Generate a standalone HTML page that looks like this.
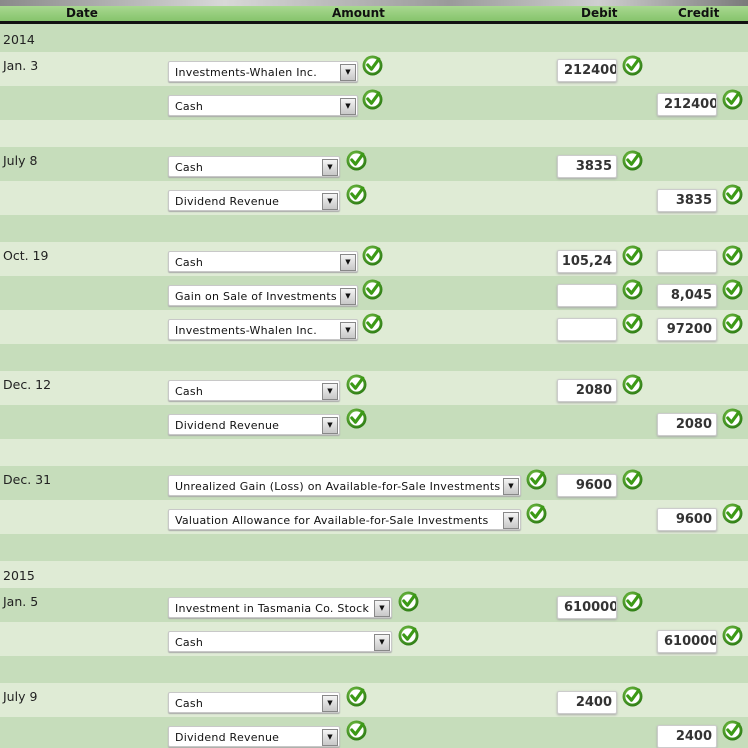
<!DOCTYPE html>
<html><head><meta charset="utf-8"><style>
body{margin:0;width:748px;height:746px;overflow:hidden;position:relative;background:#c6ddbb;font-family:"DejaVu Sans","Liberation Sans",sans-serif;}
.top{position:absolute;left:0;top:0;width:748px;height:6px;background:linear-gradient(90deg,#8a8a8a,#d8d8d8 30%,#9a9a9a 60%,#cfcfcf 80%,#7a7a7a);}
.hdr{position:absolute;left:0;top:6px;width:748px;height:15px;background:linear-gradient(#a8d890,#86c46c);font-weight:bold;font-size:12px;color:#111;}
.hdr span{position:absolute;top:0;line-height:14px;}
.bl{position:absolute;left:0;top:21px;width:748px;height:3px;background:#111;}
.r{position:absolute;left:0;width:748px;}
.d{background:#c6ddbb}.l{background:#dfebd5}
.dt{position:absolute;left:3px;font-size:12.5px;color:#222;}
.s{position:absolute;left:168px;height:21px;background:#fff;border:1px solid #c8c8c8;border-radius:2px;box-shadow:0 1px 1px #aaa;font-size:11px;letter-spacing:0.25px;color:#111;line-height:21px;padding-left:6px;box-sizing:border-box;white-space:nowrap;}
.s b{position:absolute;right:1px;top:2px;width:14px;height:15px;border:1px solid #888;background:linear-gradient(#f4f4f4,#c8c8c8);font-size:7px;line-height:15px;text-align:center;font-weight:normal;letter-spacing:0;}
.i{position:absolute;width:60px;height:23px;background:#fff;border:1px solid #ccc;border-radius:2px;box-shadow:0 1px 2px #aaa;box-sizing:border-box;font-weight:bold;font-size:13px;color:#333;text-align:right;line-height:22px;padding-right:4px;overflow:hidden;white-space:nowrap;}
.i.lg{text-align:left;padding-left:6px;padding-right:0;}
.c{position:absolute;width:21px;height:21px;}
</style></head><body>
<div class="top"></div>
<div class="hdr"><span style="left:66px">Date</span><span style="left:332px">Amount</span><span style="left:581px">Debit</span><span style="left:678px">Credit</span></div>
<div class="bl"></div>
<svg width="0" height="0" style="position:absolute"><defs><radialGradient id="g" cx="40%" cy="35%" r="70%"><stop offset="0" stop-color="#7cc64a"/><stop offset="1" stop-color="#2a7a12"/></radialGradient><symbol id="ck" viewBox="0 0 20 20"><circle cx="10" cy="10" r="9.5" fill="url(#g)"/><circle cx="10" cy="10" r="6.8" fill="#fff"/><path d="M5.5 9.5 L9 13.5 L16 4" fill="none" stroke="#3c9a16" stroke-width="3" stroke-linecap="round" stroke-linejoin="round"/></symbol></defs></svg>

<div class="r d" style="top:24px;height:28px"><span class="dt" style="top:8px">2014</span></div>
<div class="r l" style="top:52px;height:34px"><span class="dt" style="top:6px">Jan. 3</span></div>
<div class="r d" style="top:86px;height:34px"></div>
<div class="r l" style="top:120px;height:27px"></div>
<div class="r d" style="top:147px;height:34px"><span class="dt" style="top:6px">July 8</span></div>
<div class="r l" style="top:181px;height:34px"></div>
<div class="r d" style="top:215px;height:27px"></div>
<div class="r l" style="top:242px;height:34px"><span class="dt" style="top:6px">Oct. 19</span></div>
<div class="r d" style="top:276px;height:34px"></div>
<div class="r l" style="top:310px;height:34px"></div>
<div class="r d" style="top:344px;height:27px"></div>
<div class="r l" style="top:371px;height:34px"><span class="dt" style="top:6px">Dec. 12</span></div>
<div class="r d" style="top:405px;height:34px"></div>
<div class="r l" style="top:439px;height:27px"></div>
<div class="r d" style="top:466px;height:34px"><span class="dt" style="top:6px">Dec. 31</span></div>
<div class="r l" style="top:500px;height:34px"></div>
<div class="r d" style="top:534px;height:27px"></div>
<div class="r l" style="top:561px;height:27px"><span class="dt" style="top:7px">2015</span></div>
<div class="r d" style="top:588px;height:34px"><span class="dt" style="top:6px">Jan. 5</span></div>
<div class="r l" style="top:622px;height:34px"></div>
<div class="r d" style="top:656px;height:27px"></div>
<div class="r l" style="top:683px;height:34px"><span class="dt" style="top:6px">July 9</span></div>
<div class="r d" style="top:717px;height:29px"></div>

<div class="s" style="top:61px;width:190px">Investments-Whalen Inc.<b>▼</b></div><svg class="c" style="left:362px;top:55px"><use href="#ck"/></svg>
<div class="i lg" style="left:557px;top:59px">212400</div><svg class="c" style="left:622px;top:55px"><use href="#ck"/></svg>
<div class="s" style="top:95px;width:190px">Cash<b>▼</b></div><svg class="c" style="left:362px;top:89px"><use href="#ck"/></svg>
<div class="i lg" style="left:657px;top:93px">212400</div><svg class="c" style="left:722px;top:89px"><use href="#ck"/></svg>

<div class="s" style="top:156px;width:172px">Cash<b>▼</b></div><svg class="c" style="left:346px;top:150px"><use href="#ck"/></svg>
<div class="i" style="left:557px;top:155px">3835</div><svg class="c" style="left:622px;top:150px"><use href="#ck"/></svg>
<div class="s" style="top:190px;width:172px">Dividend Revenue<b>▼</b></div><svg class="c" style="left:346px;top:184px"><use href="#ck"/></svg>
<div class="i" style="left:657px;top:189px">3835</div><svg class="c" style="left:722px;top:184px"><use href="#ck"/></svg>

<div class="s" style="top:251px;width:190px">Cash<b>▼</b></div><svg class="c" style="left:362px;top:245px"><use href="#ck"/></svg>
<div class="i" style="left:557px;top:250px">105,24</div><svg class="c" style="left:622px;top:245px"><use href="#ck"/></svg>
<div class="i" style="left:657px;top:250px"></div><svg class="c" style="left:722px;top:245px"><use href="#ck"/></svg>
<div class="s" style="top:285px;width:190px">Gain on Sale of Investments<b>▼</b></div><svg class="c" style="left:362px;top:279px"><use href="#ck"/></svg>
<div class="i" style="left:557px;top:284px"></div><svg class="c" style="left:622px;top:279px"><use href="#ck"/></svg>
<div class="i" style="left:657px;top:284px">8,045</div><svg class="c" style="left:722px;top:279px"><use href="#ck"/></svg>
<div class="s" style="top:319px;width:190px">Investments-Whalen Inc.<b>▼</b></div><svg class="c" style="left:362px;top:313px"><use href="#ck"/></svg>
<div class="i" style="left:557px;top:318px"></div><svg class="c" style="left:622px;top:313px"><use href="#ck"/></svg>
<div class="i" style="left:657px;top:318px">97200</div><svg class="c" style="left:722px;top:313px"><use href="#ck"/></svg>

<div class="s" style="top:380px;width:172px">Cash<b>▼</b></div><svg class="c" style="left:346px;top:374px"><use href="#ck"/></svg>
<div class="i" style="left:557px;top:379px">2080</div><svg class="c" style="left:622px;top:374px"><use href="#ck"/></svg>
<div class="s" style="top:414px;width:172px">Dividend Revenue<b>▼</b></div><svg class="c" style="left:346px;top:408px"><use href="#ck"/></svg>
<div class="i" style="left:657px;top:413px">2080</div><svg class="c" style="left:722px;top:408px"><use href="#ck"/></svg>

<div class="s" style="top:475px;width:353px">Unrealized Gain (Loss) on Available-for-Sale Investments<b>▼</b></div><svg class="c" style="left:526px;top:469px"><use href="#ck"/></svg>
<div class="i" style="left:557px;top:474px">9600</div><svg class="c" style="left:622px;top:469px"><use href="#ck"/></svg>
<div class="s" style="top:509px;width:353px">Valuation Allowance for Available-for-Sale Investments<b>▼</b></div><svg class="c" style="left:526px;top:503px"><use href="#ck"/></svg>
<div class="i" style="left:657px;top:508px">9600</div><svg class="c" style="left:722px;top:503px"><use href="#ck"/></svg>

<div class="s" style="top:597px;width:224px">Investment in Tasmania Co. Stock<b>▼</b></div><svg class="c" style="left:398px;top:591px"><use href="#ck"/></svg>
<div class="i lg" style="left:557px;top:596px">610000</div><svg class="c" style="left:622px;top:591px"><use href="#ck"/></svg>
<div class="s" style="top:631px;width:224px">Cash<b>▼</b></div><svg class="c" style="left:398px;top:625px"><use href="#ck"/></svg>
<div class="i lg" style="left:657px;top:630px">610000</div><svg class="c" style="left:722px;top:625px"><use href="#ck"/></svg>

<div class="s" style="top:692px;width:172px">Cash<b>▼</b></div><svg class="c" style="left:346px;top:686px"><use href="#ck"/></svg>
<div class="i" style="left:557px;top:691px">2400</div><svg class="c" style="left:622px;top:686px"><use href="#ck"/></svg>
<div class="s" style="top:726px;width:172px">Dividend Revenue<b>▼</b></div><svg class="c" style="left:346px;top:720px"><use href="#ck"/></svg>
<div class="i" style="left:657px;top:725px">2400</div><svg class="c" style="left:722px;top:720px"><use href="#ck"/></svg>
</body></html>
